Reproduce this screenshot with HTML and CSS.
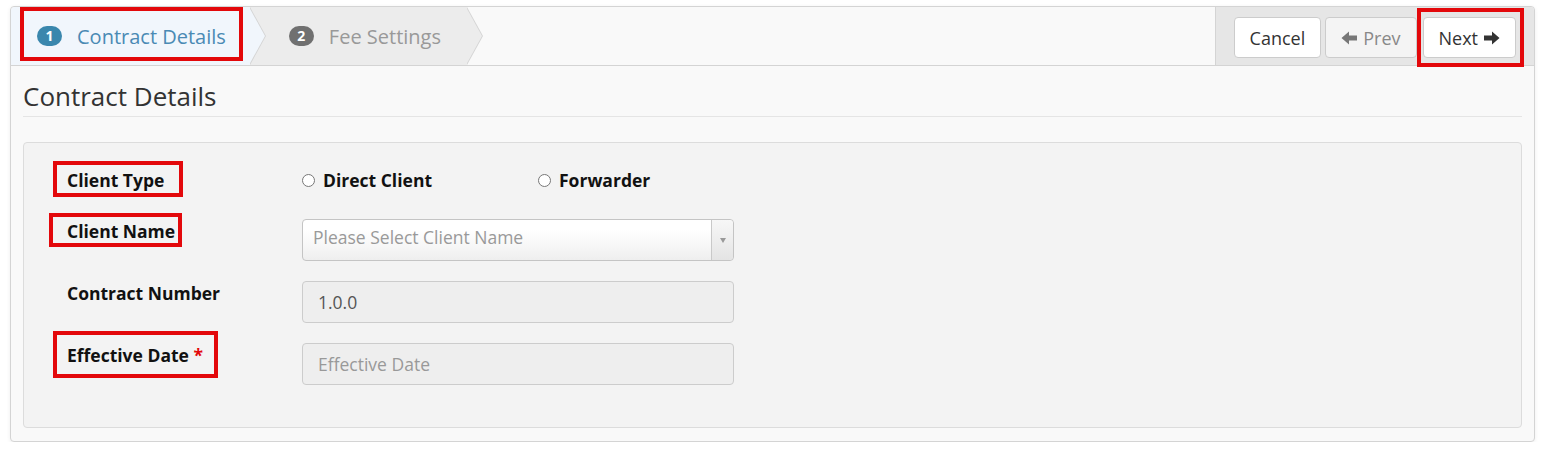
FILE: index.html
```html
<!DOCTYPE html>
<html lang="en">
<head>
  <meta charset="UTF-8" />
  <meta name="viewport" content="width=device-width, initial-scale=1.0" />
  <title>Contract Wizard</title>
  <link rel="stylesheet" href="styles.css">
</head>
<body>
  <div class="wizard">
    <!-- Step bar + actions -->
    <div class="wizard-head">
      <ul class="steps">
        <li class="step active">
          <span class="badge">1</span>Contract Details
          <span class="mark mark-step"></span>
        </li>
        <li class="step">
          <span class="badge">2</span>Fee Settings
        </li>
      </ul>
      <div class="actions">
        <button class="btn">Cancel</button>
        <button class="btn btn-prev" disabled>
          <svg class="arrow" viewBox="0 0 16 14"><path d="M16 4.5H8V0.5L0.5 7L8 13.5V9.5H16z"/></svg>Prev
        </button>
        <button class="btn btn-next">
          Next<svg class="arrow" viewBox="0 0 16 14"><path d="M0 4.5h8V0.5L15.5 7L8 13.5V9.5H0z"/></svg>
          <span class="mark mark-next"></span>
        </button>
      </div>
    </div>

    <!-- Form -->
    <div class="wizard-body">
      <h3 class="section-title">Contract Details</h3>
      <div class="panel">
        <div class="form-row row-radio">
          <div class="label-col">
            <span class="field-label">Client Type<span class="mark mark-type"></span></span>
          </div>
          <div class="radio-group">
            <label class="radio"><input type="radio" name="client-type" />Direct Client</label>
            <label class="radio"><input type="radio" name="client-type" />Forwarder</label>
          </div>
        </div>

        <div class="form-row">
          <div class="label-col">
            <span class="field-label">Client Name<span class="mark mark-name"></span></span>
          </div>
          <div class="select-box">
            <span class="select-text">Please Select Client Name</span>
            <span class="select-arrow"><b></b></span>
          </div>
        </div>

        <div class="form-row">
          <div class="label-col">
            <span class="field-label">Contract Number</span>
          </div>
          <input class="text-input" type="text" value="1.0.0" readonly />
        </div>

        <div class="form-row">
          <div class="label-col">
            <span class="field-label">Effective Date <span class="required">*</span><span class="mark mark-date"></span></span>
          </div>
          <input class="text-input" type="text" placeholder="Effective Date" readonly />
        </div>
      </div>
    </div>
  </div>
</body>
</html>
```

FILE: styles.css
```css
/* Reset */
* { box-sizing: border-box; margin: 0; padding: 0; }
body { font-family: "Open Sans", Arial, sans-serif; font-size: 17.5px; color: #333; background: #fff; }

/* Red annotation boxes */
.mark { position: absolute; border: 4px solid #e3080b; pointer-events: none; z-index: 5; }
.mark-step { left: 9px; right: 7px; top: 0; bottom: 4px; }
.mark-next { left: -7px; right: -9px; top: -10px; bottom: -10px; }
.mark-type { left: -14px; right: -19px; top: -7px; bottom: -5px; }
.mark-name { left: -18px; right: -7px; top: -6px; bottom: -4px; }
.mark-date { left: -14px; right: -15px; top: -12px; bottom: -11px; }

/* Wizard shell */
.wizard { margin: 6px 18px 0 10px; background: #f9f9f9; border: 1px solid #d4d4d4; border-radius: 4px; box-shadow: 0 1px 4px rgba(0,0,0,0.065); }
.wizard-head { display: flex; height: 59px; border-bottom: 1px solid #d4d4d4; }

/* Steps */
.steps { display: flex; list-style: none; }
.step { position: relative; display: flex; align-items: center; height: 58px; padding: 0 26px 0 39px; background: #ececec; color: #999; font-size: 20px; z-index: 1; }
.step::before, .step::after { content: ""; position: absolute; top: 0; border-top: 29px solid transparent; border-bottom: 29px solid transparent; }
.step::before { right: -16px; border-left: 16px solid #d4d4d4; }
.step::after { right: -15px; border-left: 16px solid #ececec; }
.step.active { padding: 0 24px 0 26px; background: #f1f6fc; color: #4a8ab4; z-index: 2; border-top-left-radius: 4px; }
.step.active::after { border-left-color: #f1f6fc; }
.badge { display: inline-block; min-width: 25px; height: 20px; margin-right: 15px; padding: 0 7px; border-radius: 10px; background: #707070; color: #fff; font-size: 14px; font-weight: bold; line-height: 20px; text-align: center; }
.step.active .badge { background: #3a87ad; }

/* Action buttons */
.actions { margin-left: auto; display: flex; align-items: flex-start; padding: 10px 18px 0 18px; background: #e6e6e6; border-left: 1px solid #d4d4d4; border-top-right-radius: 4px; }
.btn { position: relative; display: flex; align-items: center; gap: 6px; height: 41px; padding: 0 15px; margin-left: 4px; font-family: inherit; font-size: 18px; color: #333; background: #fff; border: 1px solid #ccc; border-radius: 4px; }
.btn:first-child { margin-left: 0; }
.btn-prev { background: #f4f4f4; color: #888; }
.btn-next { margin-left: 6px; }
.arrow { width: 16px; height: 14px; fill: currentColor; }
.btn-prev .arrow { fill: #777; }

/* Body */
.wizard-body { padding: 0 12px 13px 12px; }
.section-title { margin-top: 12px; padding-bottom: 2px; font-size: 26px; font-weight: 400; line-height: 36px; color: #333; border-bottom: 1px solid #e5e5e5; }
.panel { margin-top: 25px; padding: 18px 0 42px 43px; background: #f3f3f3; border: 1px solid #dcdcdc; border-radius: 4px; }

/* Form rows */
.form-row { display: flex; align-items: flex-start; margin-bottom: 20px; }
.form-row:last-child { margin-bottom: 0; }
.label-col { width: 235px; flex-shrink: 0; }
.field-label { position: relative; display: inline-block; font-weight: bold; line-height: 24px; color: #111; }
.required { color: #e3080b; }
.row-radio { align-items: center; height: 38px; }

/* Radios */
.radio-group { display: flex; }
.radio { display: flex; align-items: center; gap: 8px; width: 236px; font-weight: bold; color: #111; }
.radio input { margin: 0; width: 13px; height: 13px; }

/* Select and inputs */
.select-box { display: flex; width: 432px; height: 42px; border: 1px solid #c4c4c4; border-radius: 4px; background: linear-gradient(#fff 25%, #f8f8f8 60%, #eee 100%); }
.select-text { flex: 1; padding-left: 10px; line-height: 34px; color: #999; }
.select-arrow { width: 22px; display: flex; align-items: center; justify-content: center; border-left: 1px solid #c9c9c9; background: linear-gradient(#f7f7f7, #e4e4e4); border-radius: 0 4px 4px 0; }
.select-arrow b { width: 0; height: 0; border-left: 3.5px solid transparent; border-right: 3.5px solid transparent; border-top: 5px solid #999; }
.text-input { width: 432px; height: 42px; padding: 0 15px; font-family: inherit; font-size: 17.5px; color: #555; background: #eee; border: 1px solid #ccc; border-radius: 4px; outline: none; }
.text-input::placeholder { color: #999; }
```
